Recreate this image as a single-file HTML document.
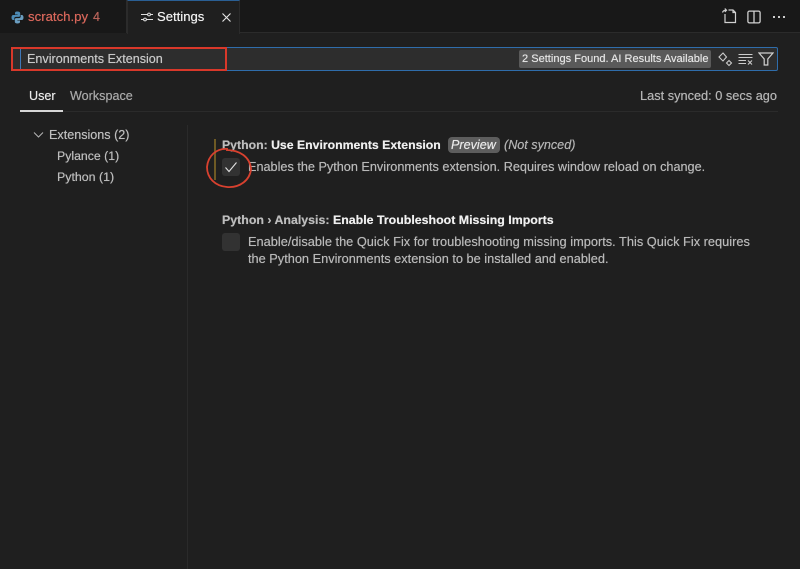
<!DOCTYPE html>
<html><head><meta charset="utf-8"><style>
*{box-sizing:border-box}
html,body{margin:0;padding:0;width:800px;height:569px;overflow:hidden;background:#1f1f1f;font-family:"Liberation Sans",sans-serif;font-size:12.6px;color:#ccc}
.a{position:absolute;white-space:nowrap;line-height:16px;text-shadow:0 0 .5px currentColor}
.b{position:absolute}
</style></head><body>
<div class="b" style="left:0;top:0;width:800px;height:33px;background:#181818;border-bottom:1px solid #2b2b2b"></div>
<div class="b" style="left:0;top:0;width:127px;height:33px;background:#181818;border-right:1px solid #2b2b2b"></div>
<div class="b" style="left:127px;top:0;width:113px;height:34px;background:#1f1f1f;border-top:1px solid #2a5f94;border-right:1px solid #2b2b2b;border-left:1px solid #2b2b2b"></div>
<svg class="b" style="left:11px;top:11px" width="13" height="13" viewBox="0 0 13 13"><path d="M6.4.5C4.4.5 4 1.3 4 2.2V3.500H6.600V4H2.300C1.100 4 .5 5 .5 6.500S1.100 9 2.200 9H3.300V7.500C3.300 6.500 4 5.900 5 5.900H7.800C8.600 5.900 9.200 5.300 9.200 4.500V2.200C9.200 1.200 8.300.5 6.400.5Z" fill="#4d8bb5"/><path d="M6.600 12.500C8.600 12.500 9 11.700 9 10.800V9.500H6.400V9H10.700C11.900 9 12.500 8 12.500 6.500S11.900 4 10.800 4H9.700V5.500C9.700 6.500 9 7.100 8 7.100H5.200C4.400 7.100 3.800 7.700 3.800 8.500V10.800C3.800 11.800 4.700 12.500 6.600 12.500Z" fill="#6b9ec0"/></svg>
<div class="a" style="left:28px;top:9px;color:#d8675b;font-size:13.200px">scratch.py</div>
<div class="a" style="left:93px;top:9px;color:#b9635a;font-size:12.600px">4</div>
<svg class="b" style="left:141px;top:11px" width="12" height="12" viewBox="0 0 12 12" fill="none" stroke="#ddd" stroke-width="1"><path d="M0 3.500H6.500M9.500 3.500H12M0 8.500H2.500M5.500 8.500H12"/><circle cx="8" cy="3.500" r="1.400"/><circle cx="4" cy="8.500" r="1.400"/></svg>
<div class="a" style="left:157px;top:9px;color:#f0f0f0;font-size:13.100px">Settings</div>
<svg class="b" style="left:222px;top:13px" width="9" height="9" viewBox="0 0 9 9" stroke="#e8e8e8" stroke-width="1.100"><path d="M.5.5L8.500 8.500M8.500.5L.5 8.500"/></svg>
<svg class="b" style="left:721px;top:8px" width="16" height="16" viewBox="0 0 16 16" fill="none" stroke="#d0d0d0" stroke-width="1.200"><path d="M4 6V14.500H14.500V4.500L12 2H7.500M12 2V4.500H14.500M1.500 4.500C2 3 3.300 2.200 5 2.200M3.800.5L5.500 2.200L3.800 3.900"/></svg>
<svg class="b" style="left:747px;top:10px" width="14" height="14" viewBox="0 0 14 14" fill="none" stroke="#d0d0d0" stroke-width="1.300"><rect x=".9" y="1.100" width="12.200" height="11.800" rx="1.500"/><path d="M7 1.100V12.900"/></svg>
<div class="b" style="left:773px;top:16px;width:2px;height:2px;background:#ccc;box-shadow:5px 0 #ccc,10px 0 #ccc"></div>

<div class="b" style="left:11px;top:47px;width:767px;height:24px;background:#2d2d2d;border:1px solid #2f6dab;border-radius:2px"></div>
<div class="b" style="left:20px;top:48px;width:1px;height:22px;background:#3f78b8"></div>
<div class="a" style="left:27px;top:51px;color:#c8c8c8">Environments Extension</div>
<div class="b" style="left:519px;top:50px;width:192px;height:18px;background:#5a5a5a;border-radius:2px"></div>
<div class="a" style="left:522px;top:51px;color:#e4e4e4;font-size:11.050px">2 Settings Found. AI Results Available</div>
<svg class="b" style="left:717px;top:52px" width="16" height="15" viewBox="0 0 16 15" fill="none" stroke="#ccc" stroke-width="1.100"><path d="M6 1L9.500 5L6 9L2 5ZM12 8.500L14.500 11L12 13.500L9.500 11Z"/></svg>
<svg class="b" style="left:738px;top:53px" width="15" height="12" viewBox="0 0 15 12" fill="none" stroke="#ccc" stroke-width="1.100"><path d="M.5 1.500H14.500M.5 4.500H14.500M.5 7.500H8M.5 10.500H8M10 7.500L14 11.500M14 7.500L10 11.500"/></svg>
<svg class="b" style="left:758px;top:52px" width="16" height="14" viewBox="0 0 16 14" fill="none" stroke="#d0d0d0" stroke-width="1.200"><path d="M1 1H15L9.800 7V13H6.200V7Z"/></svg>

<div class="b" style="left:11px;top:47px;width:216px;height:24px;border:2px solid #d9382a"></div>

<div class="a" style="left:29px;top:88px;color:#e8e8e8">User</div>
<div class="a" style="left:70px;top:88px;color:#a8a8a8">Workspace</div>
<div class="b" style="left:20px;top:110px;width:43px;height:2px;background:#d6d6d6"></div>
<div class="b" style="left:63px;top:111px;width:715px;height:1px;background:#2b2b2b"></div>
<div class="a" style="right:23px;top:88px;color:#b4b4b4;font-size:12.770px">Last synced: 0 secs ago</div>

<svg class="b" style="left:33px;top:131px" width="12" height="8" viewBox="0 0 12 8" fill="none" stroke="#b5b5b5" stroke-width="1"><path d="M1 1.500L5.500 6L10 1.500"/></svg>
<div class="a" style="left:49px;top:127px;color:#bdbdbd">Extensions (2)</div>
<div class="a" style="left:57px;top:148px;color:#bdbdbd;font-size:12.300px">Pylance (1)</div>
<div class="a" style="left:57px;top:169px;color:#bdbdbd;font-size:12.400px">Python (1)</div>
<div class="b" style="left:187px;top:125px;width:1px;height:444px;background:#2a2a2a"></div>

<div class="b" style="left:214px;top:139px;width:2px;height:41px;background:#6e5a24"></div>
<div class="a" style="left:222px;top:137px;color:#bdbdbd;font-weight:700;font-size:12.270px">Python: <span style="color:#f0f0f0">Use Environments Extension</span></div>
<div class="b" style="left:448px;top:137px;width:52px;height:16px;background:#5d5d5d;border-radius:4px"></div>
<div class="a" style="left:451px;top:137px;color:#e8e8e8;font-style:italic">Preview</div>
<div class="a" style="left:504px;top:137px;color:#b4b4b4;font-style:italic">(Not synced)</div>
<div class="b" style="left:222px;top:158px;width:18px;height:18px;background:#323232;border-radius:3px"></div>
<svg class="b" style="left:224px;top:160px" width="14" height="14" viewBox="0 0 14 14" fill="none" stroke="#e2e2e2" stroke-width="1.100"><path d="M1.500 7.500L5 11.500L12.500 2.500"/></svg>
<div class="a" style="left:248px;top:159px;color:#b8b8b8;font-size:12.680px">Enables the Python Environments extension. Requires window reload on change.</div>
<svg class="b" style="left:204px;top:147px" width="50" height="44" viewBox="0 0 50 44" fill="none" stroke="#d8412f" stroke-width="1.800"><path d="M24 2C12 1 4 9 3 20C3 31 11 39 23 40C36 41 46 33 47 22C46 10 36 3 22 3"/></svg>

<div class="a" style="left:222px;top:212px;color:#bdbdbd;font-weight:700;font-size:12.380px">Python › Analysis: <span style="color:#f0f0f0">Enable Troubleshoot Missing Imports</span></div>
<div class="b" style="left:222px;top:233px;width:18px;height:18px;background:#323232;border-radius:3px"></div>
<div class="a" style="left:248px;top:234px;color:#b8b8b8;font-size:12.800px">Enable/disable the Quick Fix for troubleshooting missing imports. This Quick Fix requires</div>
<div class="a" style="left:248px;top:251px;color:#b8b8b8;font-size:12.780px">the Python Environments extension to be installed and enabled.</div>
</body></html>
